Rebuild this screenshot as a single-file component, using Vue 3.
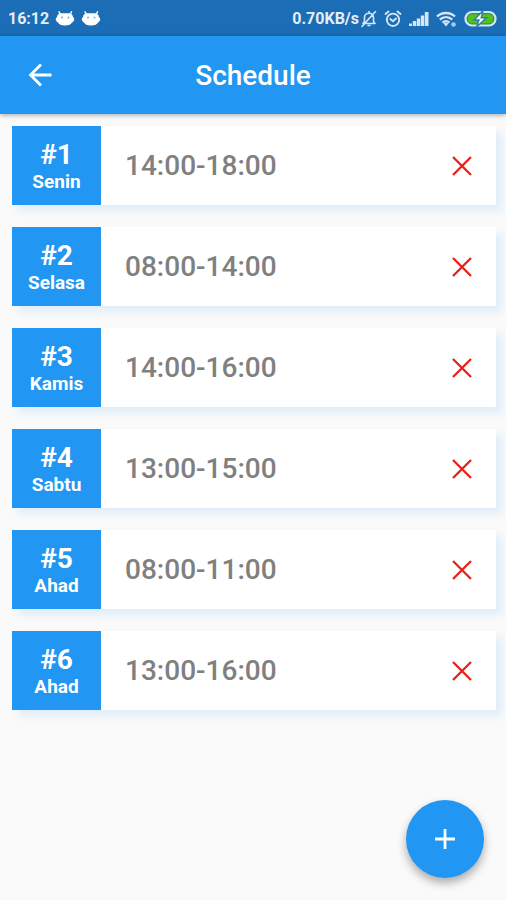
<script setup>
import { ref } from 'vue'

const items = ref([
  { id: 1, day: 'Senin', time: '14:00-18:00' },
  { id: 2, day: 'Selasa', time: '08:00-14:00' },
  { id: 3, day: 'Kamis', time: '14:00-16:00' },
  { id: 4, day: 'Sabtu', time: '13:00-15:00' },
  { id: 5, day: 'Ahad', time: '08:00-11:00' },
  { id: 6, day: 'Ahad', time: '13:00-16:00' },
])

function remove(id) {
  items.value = items.value.filter((item) => item.id !== id)
}
</script>

<template>
  <div class="screen">
    <div class="status">
      <div class="status-group">
        <span class="clock">16:12</span>
        <svg v-for="n in 2" :key="n" class="droid" width="20" height="16" viewBox="0 0 20 16">
          <path d="M4 0.800L5.500 3.500M16.500 0.800L15 3.500" stroke="#fff" stroke-width="1.400" stroke-linecap="round" />
          <path d="M6 2.200H14C16.500 2.200 18 4 18 6.200C19.200 6.600 19.500 8 19 9.500C18.500 10.800 17.500 11 17 11.500C16 13.600 14 14.500 10 14.500S4 13.600 3 11.500C2.500 11 1.500 10.800 1 9.500C0.500 8 0.800 6.600 2 6.200C2 4 3.500 2.200 6 2.200Z" fill="#fff" />
          <circle cx="7" cy="6.500" r="0.900" fill="#6fa5d5" />
          <circle cx="13.500" cy="6.500" r="0.900" fill="#6fa5d5" />
        </svg>
      </div>
      <div class="status-group right">
        <span class="speed">0.70KB/s</span>
        <svg class="mute" width="16" height="18" viewBox="0 0 16 18" fill="none" stroke="#d5e6f6" stroke-width="1.600" stroke-linecap="round" stroke-linejoin="round">
          <path d="M2 13.500H14L12.500 11.500V7.500C12.500 5 11 3.300 8 3.300S3.500 5 3.500 7.500V11.500ZM7 15.500H9M8 1.500V3M1 16.500L14.500 1.500" />
        </svg>
        <svg class="alarm" width="18" height="18" viewBox="0 0 18 18" fill="none" stroke="#d5e6f6" stroke-width="1.900" stroke-linecap="round" stroke-linejoin="round">
          <circle cx="9" cy="9.800" r="6.200" />
          <path d="M1.500 4L4.500 1.500M16.500 4L13.500 1.500M6.300 9L9 11.200L12 8.500" />
        </svg>
        <svg class="signal" width="20" height="16" viewBox="0 0 20 16" fill="#d5e6f6">
          <path d="M0 12.500H3V15H0ZM3.800 10H7.200V15H3.800ZM7.800 7.500H11.200V15H7.800ZM11.800 4.500H15.200V15H11.800ZM15.800 1H19.500V15H15.800Z" />
        </svg>
        <svg class="wifi" width="21" height="17" viewBox="0 0 21 17" fill="none" stroke="#d5e6f6" stroke-width="2.300">
          <path d="M1 5.500C6 0.800 14 0.800 19 5.500M3.800 8.700C7.500 5.200 12.500 5.200 16.200 8.700M6.500 11.700C8.700 9.700 11.300 9.700 13.500 11.700" />
          <path d="M7.500 12.500L10 15.500L12.500 12.500Q10 10.500 7.500 12.500Z" fill="#d5e6f6" stroke="none" />
          <circle cx="17.500" cy="13.500" r="2.300" fill="#a9cbea" stroke="none" />
        </svg>
        <svg class="battery" width="34" height="18" viewBox="0 0 34 18">
          <rect x="1.500" y="2" width="30" height="13.500" rx="6.500" fill="#3f8a5a" stroke="#d5e6f6" stroke-width="2.200" />
          <rect x="4" y="4.200" width="25" height="9" rx="4" fill="#4fc51c" />
          <path d="M19 0.800L10 10H15L12.500 17L22.500 7.800H17.200Z" fill="#fff" stroke="#2f79b0" stroke-width="1.400" />
        </svg>
      </div>
    </div>

    <header class="appbar">
      <button class="icon-button" type="button" aria-label="Back">
        <svg width="24" height="24" viewBox="0 0 24 24" fill="none" stroke="#fff" stroke-width="2.800">
          <path d="M23.500 12H3M13 1.500L2.500 12L13 22.500" />
        </svg>
      </button>
      <h1 class="title">Schedule</h1>
    </header>

    <main>
      <ul class="list">
        <li v-for="item in items" :key="item.id" class="card">
          <div class="badge">
            <span class="number">#{{ item.id }}</span>
            <span class="day">{{ item.day }}</span>
          </div>
          <span class="time">{{ item.time }}</span>
          <button class="icon-button delete" type="button" :aria-label="`Delete #${item.id}`" @click="remove(item.id)">
            <svg width="20" height="20" viewBox="0 0 20 20" fill="none" stroke="#e8201a" stroke-width="2.300">
              <path d="M1 1L19 19M19 1L1 19" />
            </svg>
          </button>
        </li>
      </ul>
    </main>

    <button class="fab" type="button" aria-label="Add schedule">
      <svg width="22" height="22" viewBox="0 0 22 22" stroke="#fff" stroke-width="2.800">
        <path d="M11 1V21M1 11H21" />
      </svg>
    </button>
  </div>
</template>

<style>
body {
  background: #fafafa;
}
</style>

<style scoped>
.screen {
  min-height: 100vh;
  font-family: Roboto, "Liberation Sans", sans-serif;
  background: #fafafa;
}
.status {
  display: flex;
  align-items: center;
  justify-content: space-between;
  height: 36px;
  padding: 2px 8px 0;
  box-sizing: border-box;
  background: #1b6db5;
  color: #e3eef8;
}
.status-group {
  display: flex;
  align-items: center;
  gap: 6px;
}
.right {
  gap: 7px;
}
.clock,
.speed {
  font-size: 16px;
  line-height: 20px;
  font-weight: 700;
}
.speed {
  margin-right: -5px;
}
svg {
  display: block;
  flex: none;
}
.appbar {
  position: relative;
  display: grid;
  grid-template-columns: 48px 1fr 48px;
  align-items: center;
  height: 78px;
  padding: 0 16px;
  background: #2196f3;
  box-shadow: 0 1px 5px rgba(0, 0, 0, 0.35);
}
.title {
  margin: 0;
  padding-top: 2px;
  font-size: 28px;
  line-height: 36px;
  font-weight: 500;
  text-align: center;
  color: #fff;
}
.icon-button {
  display: flex;
  align-items: center;
  justify-content: center;
  width: 48px;
  height: 48px;
  padding: 0;
  border: 0;
  background: none;
  cursor: pointer;
}
.list {
  display: flex;
  flex-direction: column;
  gap: 22px;
  margin: 0;
  padding: 12px 10px 12px 12px;
  list-style: none;
}
.card {
  display: flex;
  align-items: center;
  height: 79px;
  background: #fff;
  box-shadow: 6px 6px 8px rgba(33, 150, 243, 0.12);
}
.badge {
  display: flex;
  flex-direction: column;
  align-items: center;
  justify-content: center;
  align-self: stretch;
  width: 89px;
  padding-top: 2px;
  box-sizing: border-box;
  background: #2196f3;
  color: #fff;
  font-weight: 700;
}
.number {
  font-size: 28px;
  line-height: 30px;
}
.day {
  font-size: 19px;
  line-height: 24px;
}
.time {
  flex: 1;
  padding-left: 24px;
  font-size: 28px;
  line-height: 36px;
  font-weight: 500;
  color: #808080;
}
.delete {
  margin-right: 10px;
}
.fab {
  position: fixed;
  right: 22px;
  bottom: 22px;
  display: flex;
  align-items: center;
  justify-content: center;
  width: 78px;
  height: 78px;
  padding: 0;
  border: 0;
  border-radius: 50%;
  background: #2196f3;
  box-shadow: 0 5px 10px rgba(0, 0, 0, 0.32);
  cursor: pointer;
}
</style>
